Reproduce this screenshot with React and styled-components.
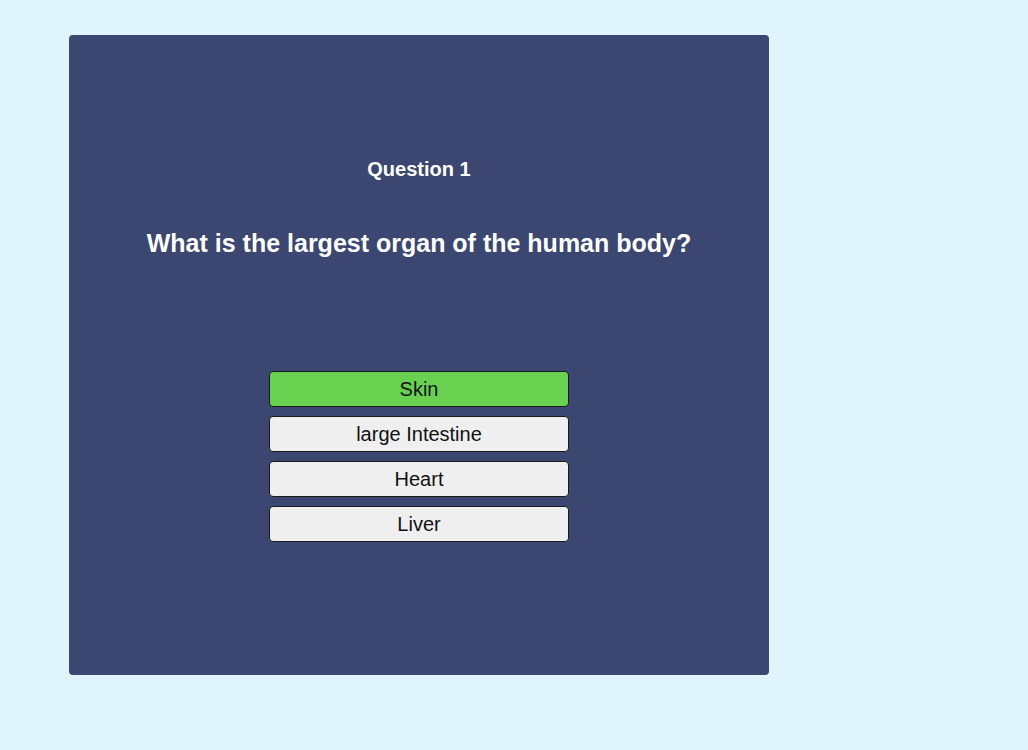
import React from "react";
import styled, { createGlobalStyle } from "styled-components";

const Global = createGlobalStyle`
  html, body { margin: 0; padding: 0; }
  body {
    background: #dff4fc;
    font-family: "Liberation Sans", Arial, sans-serif;
    width: 1028px;
    height: 750px;
  }
`;

const Page = styled.div`
  padding: 35px 0 0 69px;
`;

const Card = styled.div`
  width: 700px;
  height: 640px;
  box-sizing: border-box;
  background: #3b4770;
  border-radius: 4px;
  color: #ffffff;
  display: flex;
  flex-direction: column;
  align-items: center;
  padding-top: 123px;
`;

const QuestionCount = styled.div`
  font-size: 20px;
  font-weight: bold;
  line-height: 23px;
`;

const QuestionText = styled.div`
  font-size: 25px;
  font-weight: bold;
  line-height: 28px;
  margin-top: 48px;
`;

const Answers = styled.div`
  display: flex;
  flex-direction: column;
  gap: 9px;
  margin-top: 114px;
`;

const AnswerButton = styled.button`
  width: 300px;
  height: 36px;
  box-sizing: border-box;
  border: 1px solid #1a1a1a;
  border-radius: 4px;
  background: ${(p) => (p.$correct ? "#68d250" : "#efefef")};
  color: #111;
  font-family: "Liberation Sans", Arial, sans-serif;
  font-size: 20px;
  padding: 0;
  cursor: pointer;
`;

const answers = [
  { text: "Skin", correct: true },
  { text: "large Intestine" },
  { text: "Heart" },
  { text: "Liver" },
];

export default function App() {
  return (
    <>
      <Global />
      <Page>
        <Card>
          <QuestionCount>Question 1</QuestionCount>
          <QuestionText>What is the largest organ of the human body?</QuestionText>
          <Answers>
            {answers.map((a) => (
              <AnswerButton key={a.text} $correct={a.correct}>
                {a.text}
              </AnswerButton>
            ))}
          </Answers>
        </Card>
      </Page>
    </>
  );
}
